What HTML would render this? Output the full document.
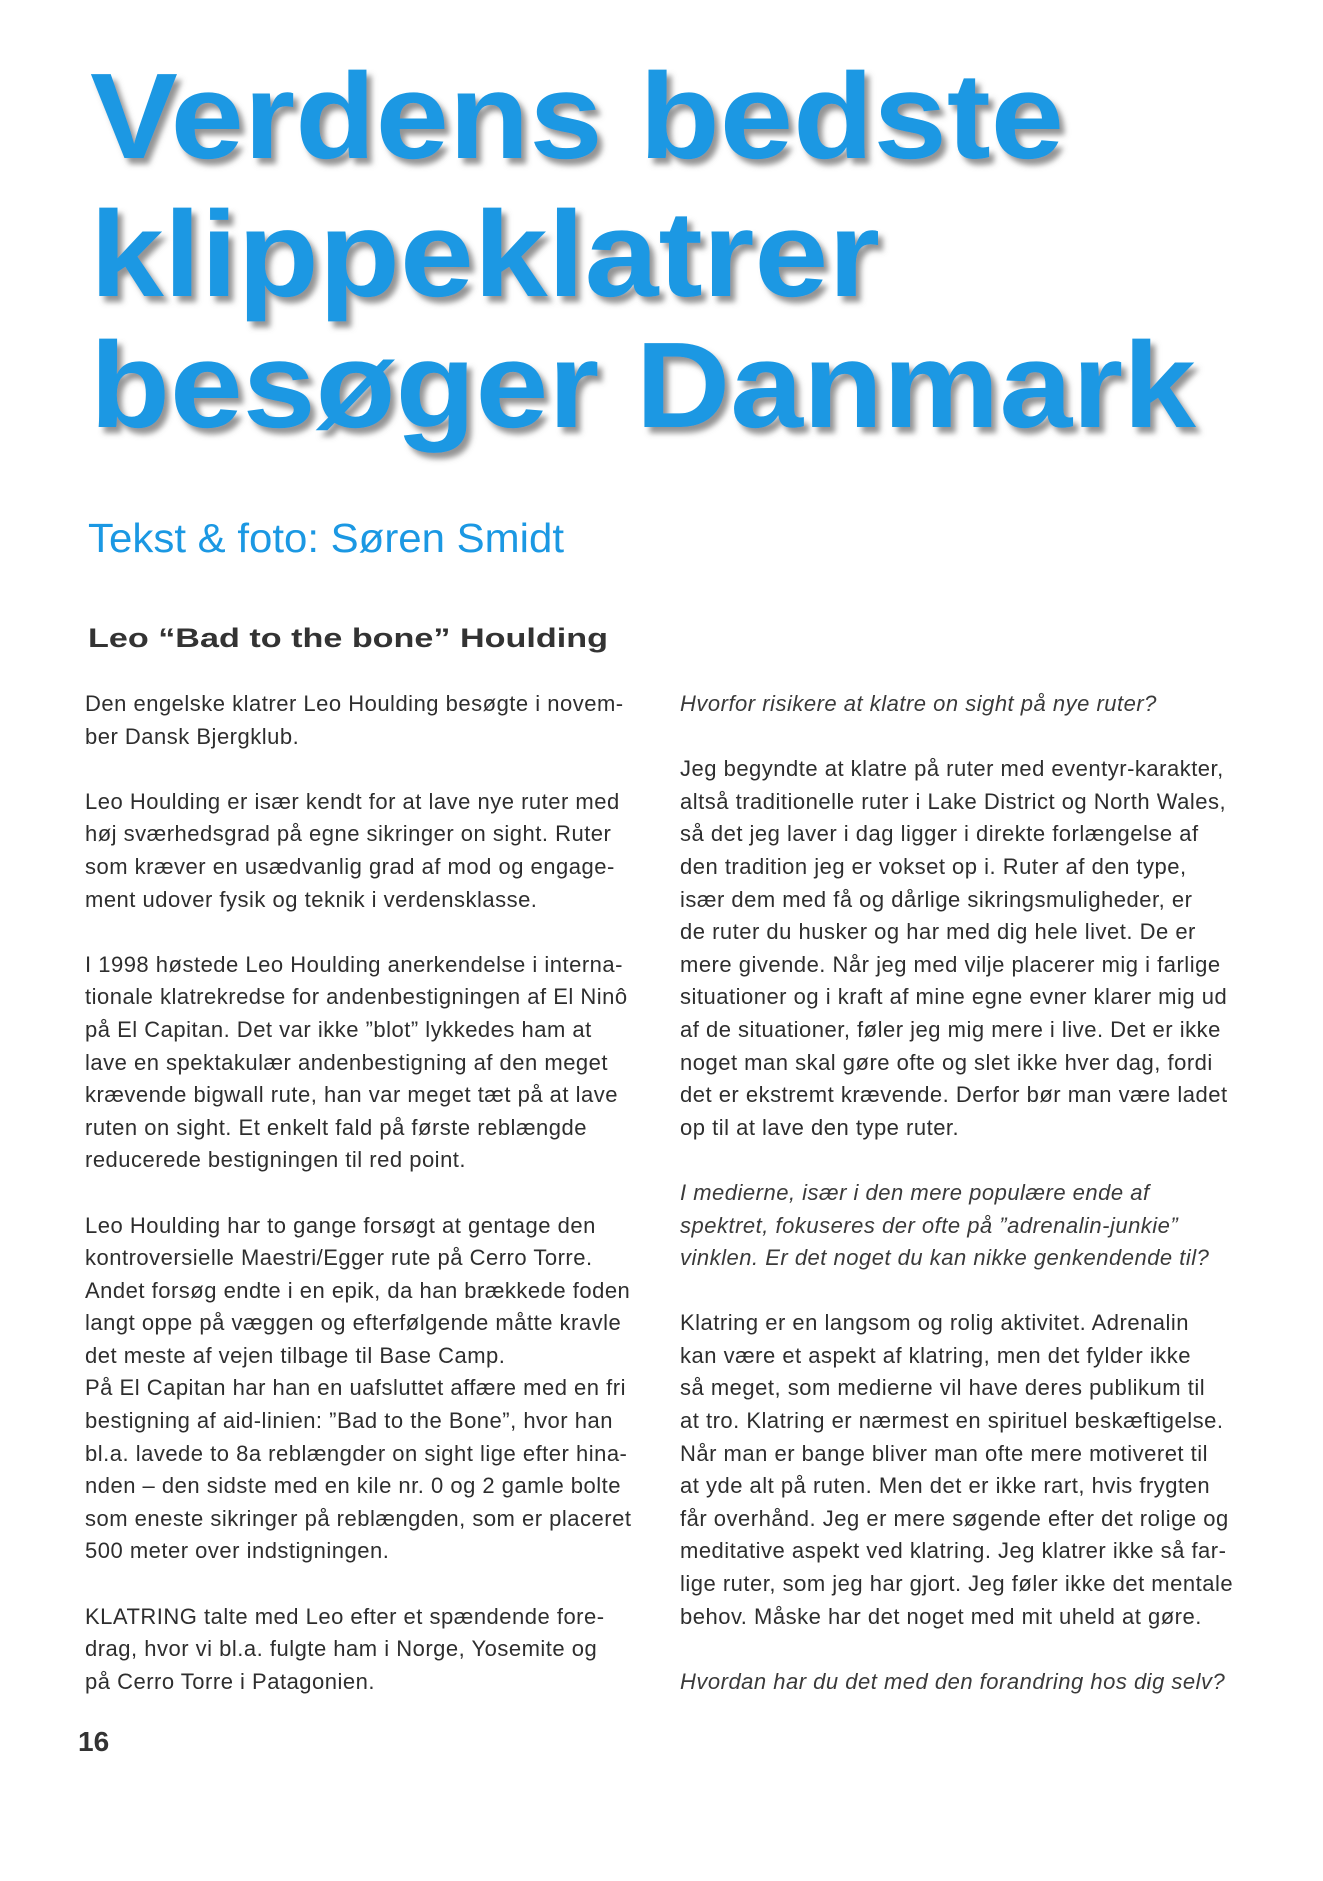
<!DOCTYPE html>
<html><head><meta charset="utf-8">
<style>
html,body{margin:0;padding:0;background:#fff;}
body{width:1323px;height:1881px;position:relative;overflow:hidden;}
svg{position:absolute;left:0;top:0;}
.col{position:absolute;top:688px;font-family:"Liberation Sans",sans-serif;font-size:22px;letter-spacing:0.5px;line-height:32.6px;color:#2e2e2e;white-space:nowrap;}
.col i{color:#3a3a3a;}
#c1{left:85px;}
#c2{left:680px;}
#pn{position:absolute;left:78px;top:1726px;font-family:"Liberation Sans",sans-serif;font-weight:bold;font-size:28px;color:#333;}
</style></head><body>
<svg width="1323" height="700" viewBox="0 0 1323 700">
<defs><filter id="sh" x="-5%" y="-20%" width="110%" height="140%"><feDropShadow dx="5" dy="6" stdDeviation="3" flood-color="#666" flood-opacity="0.7"/></filter></defs>
<g font-family="'Liberation Sans Narrow','Liberation Sans',sans-serif" font-weight="bold" font-size="122" fill="#1b98e3" filter="url(#sh)">
<text x="90" y="158" textLength="974" lengthAdjust="spacingAndGlyphs">Verdens bedste</text>
<text x="90" y="296" textLength="790" lengthAdjust="spacingAndGlyphs">klippeklatrer</text>
<text x="90" y="427" textLength="1106" lengthAdjust="spacingAndGlyphs">besøger Danmark</text>
</g>
<text x="88" y="552" font-family="'Liberation Sans Narrow','Liberation Sans',sans-serif" font-size="41" fill="#1b98e3" textLength="476" lengthAdjust="spacingAndGlyphs">Tekst &amp; foto: Søren Smidt</text>
<text x="88" y="647" font-family="'Liberation Sans Narrow','Liberation Sans',sans-serif" font-weight="bold" font-size="27" fill="#333" textLength="520" lengthAdjust="spacingAndGlyphs">Leo “Bad to the bone” Houlding</text>
</svg>
<div class="col" id="c1">Den engelske klatrer Leo Houlding besøgte i novem-<br>ber Dansk Bjergklub.<br><br>Leo Houlding er især kendt for at lave nye ruter med<br>høj sværhedsgrad på egne sikringer on sight. Ruter<br>som kræver en usædvanlig grad af mod og engage-<br>ment udover fysik og teknik i verdensklasse.<br><br>I 1998 høstede Leo Houlding anerkendelse i interna-<br>tionale klatrekredse for andenbestigningen af El Ninô<br>på El Capitan. Det var ikke ”blot” lykkedes ham at<br>lave en spektakulær andenbestigning af den meget<br>krævende bigwall rute, han var meget tæt på at lave<br>ruten on sight. Et enkelt fald på første reblængde<br>reducerede bestigningen til red point.<br><br>Leo Houlding har to gange forsøgt at gentage den<br>kontroversielle Maestri/Egger rute på Cerro Torre.<br>Andet forsøg endte i en epik, da han brækkede foden<br>langt oppe på væggen og efterfølgende måtte kravle<br>det meste af vejen tilbage til Base Camp.<br>På El Capitan har han en uafsluttet affære med en fri<br>bestigning af aid-linien: ”Bad to the Bone”, hvor han<br>bl.a. lavede to 8a reblængder on sight lige efter hina-<br>nden – den sidste med en kile nr. 0 og 2 gamle bolte<br>som eneste sikringer på reblængden, som er placeret<br>500 meter over indstigningen.<br><br>KLATRING talte med Leo efter et spændende fore-<br>drag, hvor vi bl.a. fulgte ham i Norge, Yosemite og<br>på Cerro Torre i Patagonien.</div>
<div class="col" id="c2"><i>Hvorfor risikere at klatre on sight på nye ruter?</i><br><br>Jeg begyndte at klatre på ruter med eventyr-karakter,<br>altså traditionelle ruter i Lake District og North Wales,<br>så det jeg laver i dag ligger i direkte forlængelse af<br>den tradition jeg er vokset op i. Ruter af den type,<br>især dem med få og dårlige sikringsmuligheder, er<br>de ruter du husker og har med dig hele livet. De er<br>mere givende. Når jeg med vilje placerer mig i farlige<br>situationer og i kraft af mine egne evner klarer mig ud<br>af de situationer, føler jeg mig mere i live. Det er ikke<br>noget man skal gøre ofte og slet ikke hver dag, fordi<br>det er ekstremt krævende. Derfor bør man være ladet<br>op til at lave den type ruter.<br><br><i>I medierne, især i den mere populære ende af<br>spektret, fokuseres der ofte på ”adrenalin-junkie”<br>vinklen. Er det noget du kan nikke genkendende til?</i><br><br>Klatring er en langsom og rolig aktivitet. Adrenalin<br>kan være et aspekt af klatring, men det fylder ikke<br>så meget, som medierne vil have deres publikum til<br>at tro. Klatring er nærmest en spirituel beskæftigelse.<br>Når man er bange bliver man ofte mere motiveret til<br>at yde alt på ruten. Men det er ikke rart, hvis frygten<br>får overhånd. Jeg er mere søgende efter det rolige og<br>meditative aspekt ved klatring. Jeg klatrer ikke så far-<br>lige ruter, som jeg har gjort. Jeg føler ikke det mentale<br>behov. Måske har det noget med mit uheld at gøre.<br><br><i>Hvordan har du det med den forandring hos dig selv?</i></div>
<div id="pn">16</div>
</body></html>
